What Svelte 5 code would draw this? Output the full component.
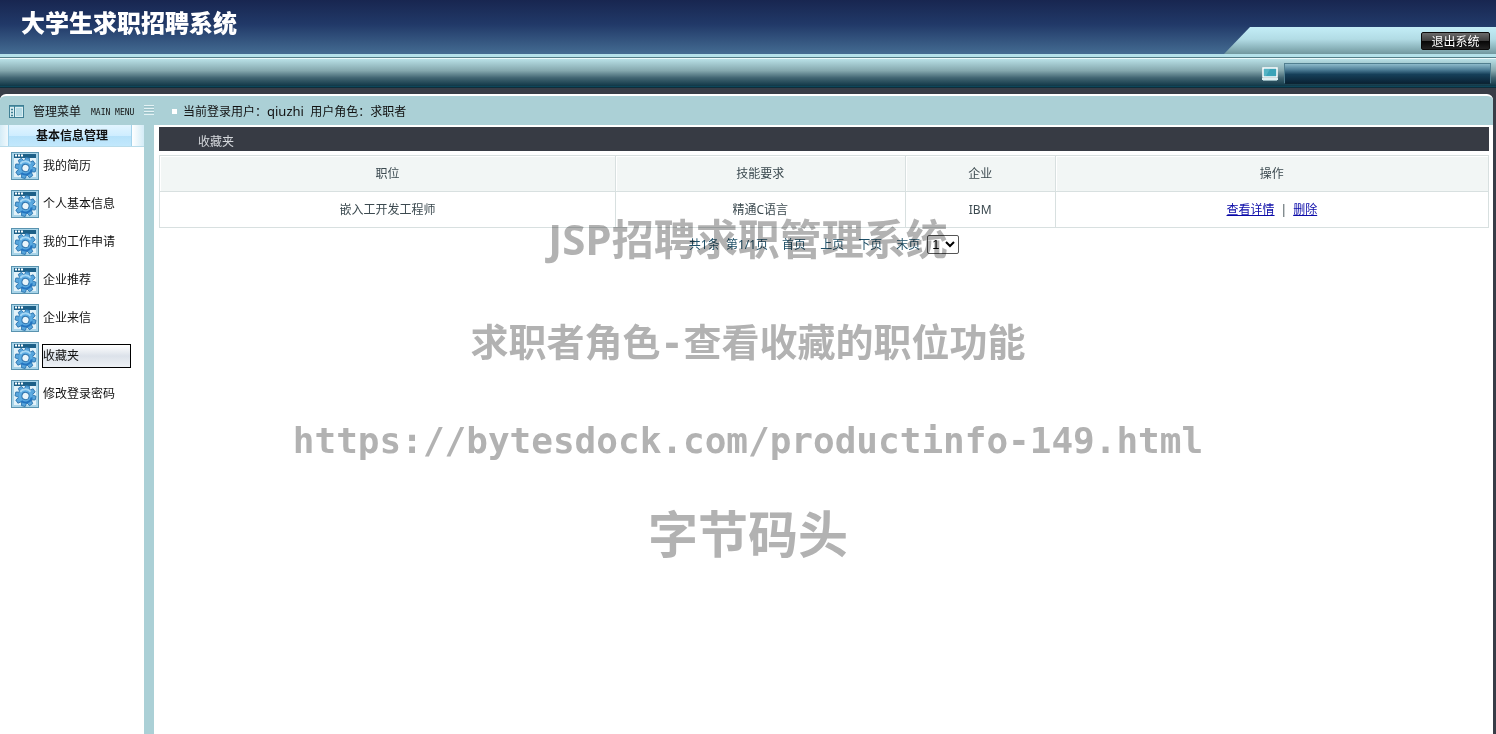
<script>
  const menu = ['我的简历', '个人基本信息', '我的工作申请', '企业推荐', '企业来信', '收藏夹', '修改登录密码'];
  const pages = ['首页', '上页', '下页', '末页'];
  const jobs = [{ post: '嵌入工开发工程师', skill: '精通C语言', company: 'IBM' }];
  let active = $state('收藏夹');
  const teeth = [0, 45, 90, 135, 180, 225, 270, 315];
</script>

<div class="page">
  <header>
    <div class="top">
      <h1>大学生求职招聘系统</h1>
      <div class="tab"><button class="exit">退出系统</button></div>
    </div>
    <div class="rule"></div>
    <div class="band">
      <svg width="16" height="14" viewBox="0 0 16 14" aria-hidden="true">
        <rect x="1" y="1" width="14" height="9" fill="#3ba3b8" stroke="#fff" stroke-width="1.5" />
        <path d="M2 9V2H8L4 9Z" fill="#55b3c4" />
        <rect x="0" y="11" width="16" height="2" fill="#dfeef1" />
        <path d="M1 13.5H15" stroke="#8fb0b8" />
      </svg>
      <div class="slot"></div>
    </div>
  </header>

  <div class="shell">
    <div class="status">
      <div class="menu-head">
        <svg width="16" height="14" viewBox="0 0 16 14" aria-hidden="true">
          <rect x=".5" y=".5" width="14" height="12" fill="#d9eef2" stroke="#3f7f94" />
          <path d="M1 1.5H14" stroke="#5b9db0" />
          <path d="M5.5 1V12" stroke="#3f7f94" />
          <path d="M2 4.5H4M2 7.5H4M2 10.5H4" stroke="#3f7f94" stroke-width="1.5" />
          <rect x="7" y="3" width="6" height="8" fill="#b4dae4" />
        </svg>
        <span>管理菜单</span>
        <small>MAIN MENU</small>
        <svg class="grip" width="10" height="12" viewBox="0 0 10 12" aria-hidden="true">
          <path d="M0 1.5H10M0 4.5H10M0 7.5H10M0 10.5H10" stroke="#e4f2f4" />
          <path d="M0 2.5H10M0 5.5H10M0 8.5H10" stroke="#8fb5bc" stroke-opacity=".6" />
        </svg>
      </div>
      <i class="dot"></i>
      <span class="user">当前登录用户：<b>qiuzhi</b>&nbsp; 用户角色：求职者</span>
    </div>

    <div class="body">
      <nav>
        <div class="group"><h2>基本信息管理</h2></div>
        {#each menu as item}
          <div class="item">
            <svg width="28" height="28" viewBox="0 0 28 28" aria-hidden="true">
              <rect x=".5" y=".5" width="27" height="27" fill="#a8d4e9" stroke="#5a93af" />
              <rect x="3" y="6" width="22" height="19" fill="#e3f2f9" />
              <rect x="3" y="2" width="22" height="4" fill="#1d6088" />
              <path d="M4 3.5H6M7 3.5H9M10 3.5H12" stroke="#fff" stroke-width="2" />
              <g transform="translate(14.5 16) rotate(12)">
                {#each teeth as a}
                  <path d="M-2.6 -6.5L-1.9 -10.3H1.9L2.6 -6.5Z" transform="rotate({a})" fill="#57a5dc" stroke="#2870aa" stroke-width=".8" />
                {/each}
                <circle r="7.2" fill="#5babe2" />
                <path d="M-6 -3A6.7 6.7 0 0 1 4 -5.4" fill="none" stroke="#a6d7f5" stroke-width="2" />
                <path d="M6.4 0A6.4 6.4 0 0 1 -3 5.7" fill="none" stroke="#2474c0" stroke-width="2" />
                <circle r="3.6" fill="#e9f5fb" stroke="#3175ae" />
              </g>
            </svg>
            <a href="#list" class:active={active === item} onclick={() => (active = item)}>{item}</a>
          </div>
        {/each}
      </nav>

      <main>
        <h3>收藏夹</h3>
        <table>
          <colgroup><col class="c-post" /><col class="c-skill" /><col class="c-company" /><col /></colgroup>
          <thead>
            <tr><th>职位</th><th>技能要求</th><th>企业</th><th>操作</th></tr>
          </thead>
          <tbody>
            {#each jobs as job}
              <tr>
                <td>{job.post}</td>
                <td>{job.skill}</td>
                <td>{job.company}</td>
                <td class="ops"><a href="#view">查看详情</a><span>|</span><a href="#remove">删除</a></td>
              </tr>
            {/each}
          </tbody>
        </table>
        <div class="pager">
          <span>共1条&nbsp; 第1/1页</span>
          {#each pages as p}<a href="#page">{p}</a>{/each}
          <select aria-label="页码"><option>1</option></select>
        </div>
      </main>
    </div>
  </div>

  <div class="mark">
    <p class="m1"><span>JSP</span>招聘求职管理系统</p>
    <p class="m2">求职者角色-查看收藏的职位功能</p>
    <p class="m3">https://bytesdock.com/productinfo-149.html</p>
    <p class="m4">字节码头</p>
  </div>
</div>

<style>
  :global(body) { margin: 0; background: #383d47; }
  .page {
    position: relative;
    display: flex;
    flex-direction: column;
    min-height: 100vh;
    overflow: hidden;
    font: 12px/16px 'Noto Sans', 'Noto Sans CJK SC', sans-serif;
    color: #111;
  }
  h1, h2, h3, p { margin: 0; }
  .top {
    display: flex;
    justify-content: space-between;
    align-items: flex-end;
    height: 54px;
    background: linear-gradient(#182650, #213968 45%, #446c92);
  }
  h1 {
    align-self: flex-start;
    padding: 6px 0 0 21px;
    font: 900 24px/32px 'Noto Sans CJK SC', sans-serif;
    color: #fff;
  }
  .tab {
    display: flex;
    justify-content: flex-end;
    align-items: center;
    box-sizing: border-box;
    width: 272px;
    height: 27px;
    padding-right: 6px;
    background: linear-gradient(#c3edf7, #b2dce5 45%, #71989f);
    clip-path: polygon(26px 0, 100% 0, 100% 100%, 0 100%);
  }
  .exit {
    width: 69px;
    height: 18px;
    padding: 0;
    border: 1px solid #0a0a0a;
    border-radius: 2px;
    background: linear-gradient(#6a6a6a, #3e3e3e 48%, #050505 50%, #222);
    color: #fff;
    font: 12px/16px 'Noto Sans CJK SC', sans-serif;
  }
  .rule {
    height: 5px;
    background: linear-gradient(#b5e2ea 3px, #547f89 3px 4px, #eefafb 4px);
  }
  .band {
    display: flex;
    justify-content: flex-end;
    align-items: center;
    gap: 6px;
    height: 29px;
    padding-right: 5px;
    background: linear-gradient(#b9e1e7, #85a8ae 40%, #426572 65%, #123948 92%, #0a4b60 96%, #10161f);
  }
  .slot {
    box-sizing: border-box;
    width: 207px;
    height: 21px;
    border: 1px solid #517f90;
    border-bottom-color: #0d2533;
    background: linear-gradient(#8ebbcb, #4e7e97 30%, #153f59 55%, #0a2335);
  }
  .shell {
    display: flex;
    flex: 1;
    flex-direction: column;
    margin: 6px 3px 0 0;
    border-top: 2px solid #fff;
    border-radius: 6px 6px 0 0;
    background: #fff;
    overflow: hidden;
  }
  .status {
    display: flex;
    align-items: center;
    box-sizing: border-box;
    height: 29px;
    padding-top: 2px;
    background: #abd0d6;
  }
  .menu-head {
    display: flex;
    align-items: center;
    gap: 8px;
    box-sizing: border-box;
    width: 172px;
    padding-left: 9px;
  }
  .menu-head small { padding: 3px 2px 0; font: 8px/12px 'DejaVu Sans Mono', monospace; white-space: nowrap; }
  .grip { align-self: flex-start; }
  .dot { width: 5px; height: 5px; margin-right: 6px; background: #fff; }
  .user b { font-size: 13px; font-weight: 400; }
  .body { display: flex; flex: 1; }
  nav {
    flex: none;
    width: 144px;
    border-right: 10px solid #abd0d6;
  }
  .group {
    padding: 0 12px 0 8px;
    background: linear-gradient(90deg, #d4ecf7, #fff 12px, #fff 132px, #d4ecf7);
    border-bottom: 1px solid #b9dcea;
  }
  h2 {
    height: 21px;
    padding-left: 4px;
    border: 1px solid #a4d3eb;
    border-width: 0 1px;
    background: linear-gradient(#e2f5ff, #cfedff 50%, #b5e1fa 50%, #c2e8fc);
    font: 700 12px/20px 'Noto Sans CJK SC', sans-serif;
    text-align: center;
  }
  .item {
    display: flex;
    align-items: center;
    gap: 3px;
    height: 38px;
    padding-left: 11px;
  }
  .item a {
    box-sizing: border-box;
    width: 89px;
    height: 24px;
    border: 1px solid transparent;
    color: #111;
    text-decoration: none;
    line-height: 21px;
  }
  .item a.active { border-color: #000; background: linear-gradient(#fff, #dce2ea 50%, #eef1f5); }
  main { flex: 1; min-width: 0; padding: 2px 4px 0 5px; }
  h3 {
    height: 24px;
    padding-left: 39px;
    background: #373b44;
    color: #d5d8dc;
    font-size: 12px;
    font-weight: 400;
    line-height: 30px;
  }
  table {
    width: 100%;
    margin-top: 4px;
    border-collapse: collapse;
    table-layout: fixed;
    color: #3c4a50;
  }
  .c-post { width: 34.3%; }
  .c-skill { width: 21.8%; }
  .c-company { width: 11.3%; }
  th, td {
    height: 35px;
    padding: 0;
    border: 1px solid #d8e0e0;
    font-weight: 400;
    text-align: center;
  }
  th { background: #f2f6f5; box-shadow: inset 1px 1px #fff; }
  .ops a { color: #0a0aa8; }
  .ops span { margin: 0 6px; }
  .pager {
    display: flex;
    justify-content: center;
    align-items: center;
    gap: 14px;
    margin-top: 7px;
    color: #1f5068;
  }
  .pager a { color: inherit; text-decoration: none; }
  select {
    width: 32px;
    height: 19px;
    margin-left: -7px;
    padding: 0;
    border: 1px solid #555;
    border-radius: 2px;
    background: #fff;
    color: #000;
    font: 13px 'Liberation Sans', sans-serif;
  }
  .mark {
    position: absolute;
    inset: 209px 0 auto;
    display: flex;
    flex-direction: column;
    align-items: center;
    color: #b2b2b2;
    font-family: 'DejaVu Sans Mono', 'Noto Sans CJK SC', monospace;
    font-weight: 700;
    line-height: 60px;
    white-space: nowrap;
    mix-blend-mode: multiply;
    pointer-events: none;
  }
  .m1 { font-size: 42px; }
  .m1 span { font-family: 'Open Sans', 'Noto Sans', sans-serif; }
  .m2 { padding-top: 42px; font-size: 38px; }
  .m3 { padding-top: 38px; font-size: 36px; }
  .m4 { padding-top: 35px; font-size: 50px; }
</style>
